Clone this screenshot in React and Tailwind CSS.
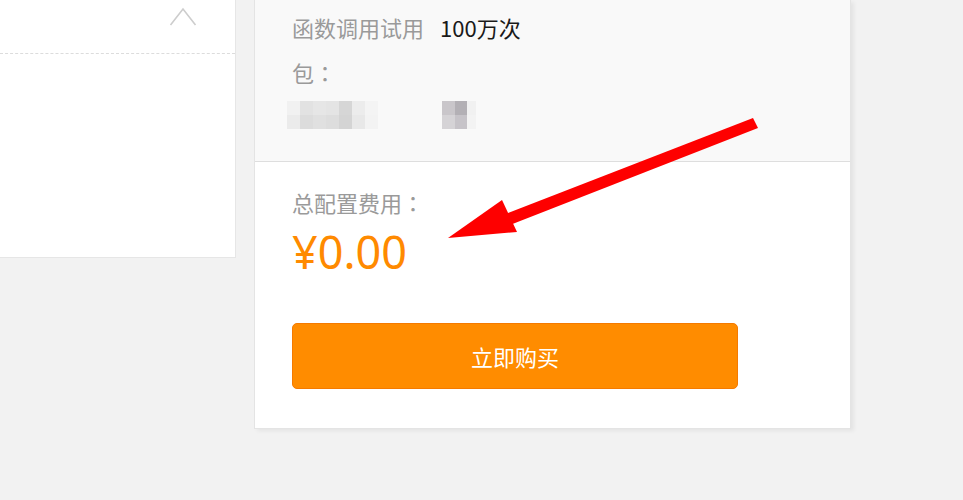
import React from 'react';

const cjk = { fontFamily: '"Noto Sans CJK SC", "Noto Sans", sans-serif' };
const colon = { fontFamily: '"Noto Sans CJK TC", sans-serif' };

const mosaicA = ['#f1f1f1', '#e2e2e2', '#e6e6e6', '#e4e4e4', '#d6d6d6', '#ececec', '#f4f4f4'];
const mosaicB = ['#ebebeb', '#dcdcdc', '#e0e0e0', '#dddddd', '#d4d4d4', '#e8e8e8', '#f3f3f3'];

function Mosaic() {
    return (
        <div className="flex items-start h-[28px] mt-[14px]">
            <div className="flex flex-col -ml-[5px]">
                <div className="flex">
                    {mosaicA.map((c, i) => (
                        <div key={i} className="w-[13px] h-[14px]" style={{ background: c }} />
                    ))}
                </div>
                <div className="flex">
                    {mosaicB.map((c, i) => (
                        <div key={i} className="w-[13px] h-[14px]" style={{ background: c }} />
                    ))}
                </div>
            </div>
            <div className="flex flex-col ml-[64px]">
                <div className="flex">
                    <div className="w-[13px] h-[14px] bg-[#c9c6ca]" />
                    <div className="w-[12px] h-[14px] bg-[#b3b0b5]" />
                    <div className="w-[9px] h-[14px] bg-[#f1f1f1]" />
                </div>
                <div className="flex">
                    <div className="w-[13px] h-[14px] bg-[#d5d3d6]" />
                    <div className="w-[12px] h-[14px] bg-[#c6c3c8]" />
                    <div className="w-[9px] h-[14px] bg-[#f3f3f3]" />
                </div>
            </div>
        </div>
    );
}

function Arrow() {
    return (
        <svg
            className="absolute left-0 top-0 pointer-events-none"
            width="963"
            height="500"
            viewBox="0 0 963 500"
        >
            <polygon points="753,118 758,128 505,227 500,216" fill="#fe0000" />
            <polygon points="448,238 502,200 517,232" fill="#fe0000" />
        </svg>
    );
}

export default function App() {
    return (
        <div className="relative w-[963px] h-[500px] bg-[#f2f2f2] overflow-hidden" style={cjk}>
            <div className="flex items-start gap-[19px]">
                <div className="w-[236px] h-[258px] bg-white border-r border-b border-[#e6e6e6]">
                    <div className="h-[54px] flex justify-end pr-[38px] pt-[7px] border-b border-dashed border-[#dcdcdc]">
                        <svg width="28" height="20" viewBox="0 0 28 20">
                            <polyline
                                points="1.5,18 14,2 26.5,18"
                                fill="none"
                                stroke="#cdcdcd"
                                strokeWidth="1.6"
                            />
                        </svg>
                    </div>
                </div>

                <div className="w-[597px] -ml-[1px] bg-white border-l border-r border-b border-[#e4e4e4] shadow-[3px_2px_4px_rgba(0,0,0,0.06)]">
                    <div className="h-[162px] bg-[#f9f9f9] border-b border-[#dedede] pl-[37px] pt-[12px]">
                        <div className="flex items-center h-[30px] text-[22px]">
                            <span className="text-[#9a9a9a]">函数调用试用</span>
                            <span className="ml-[16px] text-[#1a1a1a]">100万次</span>
                        </div>
                        <div className="flex items-center h-[30px] mt-[15px] text-[22px] text-[#9a9a9a]">
                            包<span style={colon}>：</span>
                        </div>
                        <Mosaic />
                    </div>

                    <div className="pl-[37px] pt-[25px] pb-[39px]">
                        <div className="flex items-center h-[30px] text-[22px] text-[#9a9a9a]">
                            总配置费用<span style={colon}>：</span>
                        </div>
                        <div
                            className="h-[50px] mt-[9px] flex items-center text-[45px] text-[#ff8a00] leading-none"
                            style={{ fontFamily: '"Noto Sans", sans-serif' }}
                        >
                            ¥0.00
                        </div>
                        <button className="mt-[47px] w-[446px] h-[66px] rounded-[5px] bg-[#ff8c00] border border-[#f57a00] text-white text-[22px] flex items-center justify-center">
                            立即购买
                        </button>
                    </div>
                </div>
            </div>
            <Arrow />
        </div>
    );
}
